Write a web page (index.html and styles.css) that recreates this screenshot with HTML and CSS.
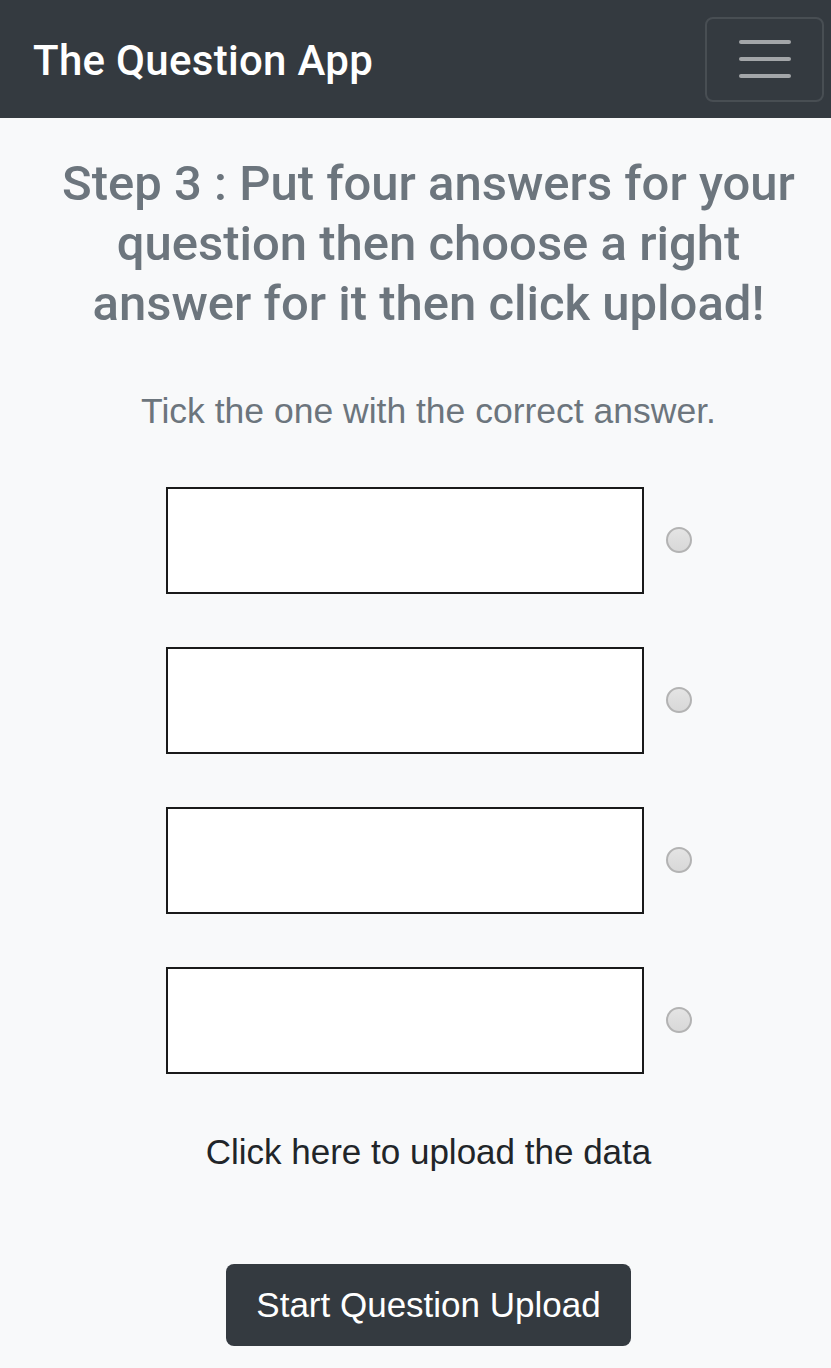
FILE: index.html
```html
<!DOCTYPE html>
<html>
<head>
<meta charset="utf-8">
<link rel="stylesheet" href="styles.css">
</head>
<body>
<nav class="navbar">
  <span class="brand">The Question App</span>
  <button class="toggler" aria-label="menu">
    <span class="bar"></span><span class="bar"></span><span class="bar"></span>
  </button>
</nav>
<main class="content">
  <h1 class="title">Step 3 : Put four answers for your question then choose a right answer for it then click upload!</h1>
  <p class="hint">Tick the one with the correct answer.</p>
  <div class="answers">
    <div class="answer-row"><input class="answer" type="text"><span class="radio"></span></div>
    <div class="answer-row"><input class="answer" type="text"><span class="radio"></span></div>
    <div class="answer-row"><input class="answer" type="text"><span class="radio"></span></div>
    <div class="answer-row"><input class="answer" type="text"><span class="radio"></span></div>
  </div>
  <p class="upload-text">Click here to upload the data</p>
  <button class="upload-btn">Start Question Upload</button>
</main>
</body>
</html>
```
FILE: styles.css
```css
html, body {
  margin: 0;
  padding: 0;
  background: #f8f9fa;
  font-family: "Liberation Sans", Arial, sans-serif;
}
.navbar {
  height: 118px;
  background: #343a40;
  display: flex;
  align-items: center;
  justify-content: space-between;
  padding: 0 7px 0 33px;
  box-sizing: border-box;
}
.brand {
  color: #fff;
  font-family: Roboto, "Liberation Sans", sans-serif;
  font-weight: 500;
  font-size: 42px;
  letter-spacing: 0.3px;
  margin-top: 2px;
}
.toggler {
  width: 119px;
  height: 85px;
  background: transparent;
  border: 2px solid rgba(255,255,255,0.1);
  border-radius: 8px;
  display: flex;
  flex-direction: column;
  align-items: center;
  justify-content: center;
  gap: 13px;
  padding: 0;
}
.bar {
  display: block;
  width: 52px;
  height: 4px;
  border-radius: 2px;
  background: rgba(255,255,255,0.55);
}
.content {
  display: flex;
  flex-direction: column;
  align-items: center;
  padding: 36px 0 0 26px;
  text-align: center;
}
.title {
  margin: 0;
  width: 770px;
  font-family: Roboto, "Liberation Sans", sans-serif;
  font-size: 49px;
  line-height: 60px;
  font-weight: 500;
  color: #6c757d;
  letter-spacing: 0;
}
.hint {
  margin: 53px 0 0;
  font-size: 35.5px;
  line-height: 48px;
  color: #6c757d;
}
.answers {
  margin-top: 52px;
  display: flex;
  flex-direction: column;
  gap: 53px;
}
.answer-row {
  display: flex;
  align-items: center;
  gap: 22px;
}
.answer {
  width: 478px;
  height: 107px;
  box-sizing: border-box;
  border: 2px solid #1a1a1a;
  background: #fff;
  margin: 0;
  padding: 0;
}
.radio {
  width: 26px;
  height: 26px;
  box-sizing: border-box;
  border-radius: 50%;
  border: 2px solid #b3b3b3;
  background: linear-gradient(#e4e4e4, #d8d8d8);
  margin-top: -2px;
}
.upload-text {
  margin: 54px 0 0;
  font-size: 35px;
  line-height: 48px;
  color: #212529;
}
.upload-btn {
  margin-top: 88px;
  width: 405px;
  height: 82px;
  background: #343a40;
  color: #fff;
  border: none;
  border-radius: 8px;
  font-family: "Liberation Sans", Arial, sans-serif;
  font-size: 35px;
  padding: 0;
}
```
